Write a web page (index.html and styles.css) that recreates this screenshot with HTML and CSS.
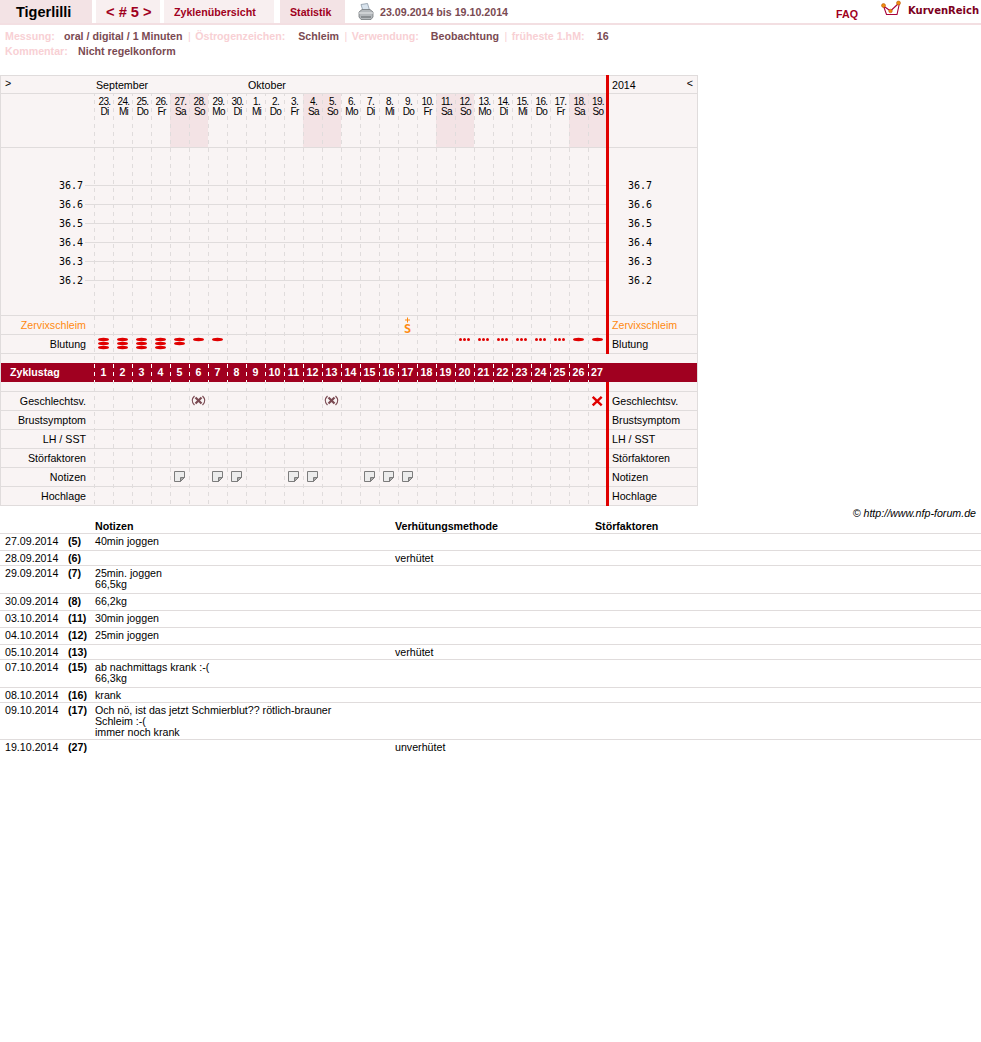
FILE: index.html
```html
<!DOCTYPE html>
<html lang="de">
<head>
<meta charset="utf-8">
<title>Tigerlilli</title>
<link rel="stylesheet" href="styles.css">
</head>
<body>
<svg class="defs" width="0" height="0">
  <defs>
    <ellipse id="bar1" cx="9.500" cy="4.500" rx="5.500" ry="1.700"/>
    <ellipse id="bar2" cx="9.500" cy="8.500" rx="5.500" ry="1.700"/>
    <ellipse id="bar3" cx="9.500" cy="12.500" rx="5.500" ry="1.700"/>
    <g id="b1"><use href="#bar1"/></g>
    <g id="b2"><use href="#bar1"/><use href="#bar2"/></g>
    <g id="b3"><use href="#bar1"/><use href="#bar2"/><use href="#bar3"/></g>
    <g id="dots"><circle cx="5.500" cy="4.500" r="1.500"/><circle cx="9.500" cy="4.500" r="1.500"/><circle cx="13.500" cy="4.500" r="1.500"/></g>
    <g id="xp" fill="none" stroke="#7a4a52"><path d="M5.500 4 Q1 8.500 5.500 13M13.500 4 Q18 8.500 13.500 13" stroke-width="1.200"/><path d="M6.500 5.500l6 6M12.500 5.500l-6 6" stroke-width="2.200"/></g>
    <g id="xr"><path d="M4.700 4.800l9 8.600M13.700 4.800l-9 8.600" fill="none" stroke="#e00000" stroke-width="2.400"/></g>
    <g id="note"><path d="M4.500 3.500h10v6l-4 4h-6z" fill="#ececec" stroke="#7c7c7c"/><path d="M14.500 9.500h-4v4z" fill="#a8a8a8" stroke="#7c7c7c"/></g>
  </defs>
</svg>

<header class="topbar">
  <div class="tab t-name">Tigerlilli</div>
  <div class="tab t-cycle">&lt; # 5 &gt;</div>
  <div class="tab t-over">Zyklenübersicht</div>
  <div class="tab t-stat">Statistik</div>
  <svg class="printer" width="16" height="18" viewBox="0 0 16 18">
    <path d="M3 1.500l6.500-1 2 6.500-6.500 1z" fill="#d9e4ee" stroke="#8a98a6" stroke-width=".8"/>
    <path d="M1 9l3-2.500h8l3 2.500v5l-2 2.500H3l-2-2.500z" fill="#b4b8bc" stroke="#74787c" stroke-width=".8"/>
    <path d="M1 10h14" stroke="#e8eaec"/>
    <path d="M3 14h10" stroke="#5e6266"/>
  </svg>
  <div class="range">23.09.2014 bis 19.10.2014</div>
  <div class="faq">FAQ</div>
  <svg class="crown" width="20" height="18" viewBox="0 0 20 18">
    <path d="M2.500 6l3 8.500h10.500l2.500-11.500M2.500 6l7 5 8.500-8" fill="none" stroke="#a8003a" stroke-width="1.100"/>
    <circle cx="2.500" cy="5.500" r="2" fill="#f08c10" stroke="#b05000" stroke-width=".5"/>
    <circle cx="9.500" cy="11" r="1.800" fill="#f08c10" stroke="#b05000" stroke-width=".5"/>
    <circle cx="17.500" cy="3" r="2" fill="#f08c10" stroke="#b05000" stroke-width=".5"/>
  </svg>
  <div class="brand">KurvenReich</div>
</header>

<section class="info">
  <div class="info-line">
    <span class="lbl l-mess">Messung:</span><span class="val">oral / digital / 1 Minuten</span><span class="sep">|</span>
    <span class="lbl l-oest">Östrogenzeichen:</span><span class="val">Schleim</span><span class="sep">|</span>
    <span class="lbl l-verw">Verwendung:</span><span class="val">Beobachtung</span><span class="sep">|</span>
    <span class="lbl l-hm">früheste 1.hM:</span><span class="val">16</span>
  </div>
  <div class="info-line">
    <span class="lbl l-komm">Kommentar:</span><span class="val">Nicht regelkonform</span>
  </div>
</section>

<section class="chart">
  <div class="row r-month">
    <div class="label arrow">&gt;</div>
    <div class="days months"><span class="m-sep">September</span><span class="m-okt">Oktober</span></div>
    <div class="right with-rail"><span>2014</span><span class="arrow-r">&lt;</span></div>
  </div>
  <div class="row r-date">
    <div class="label"></div>
    <div class="days">
      <div class="d">23.<br>Di</div><div class="d">24.<br>Mi</div><div class="d">25.<br>Do</div><div class="d">26.<br>Fr</div><div class="d we">27.<br>Sa</div><div class="d we">28.<br>So</div><div class="d">29.<br>Mo</div><div class="d">30.<br>Di</div><div class="d">1.<br>Mi</div><div class="d">2.<br>Do</div><div class="d">3.<br>Fr</div><div class="d we">4.<br>Sa</div><div class="d we">5.<br>So</div><div class="d">6.<br>Mo</div><div class="d">7.<br>Di</div><div class="d">8.<br>Mi</div><div class="d">9.<br>Do</div><div class="d">10.<br>Fr</div><div class="d we">11.<br>Sa</div><div class="d we">12.<br>So</div><div class="d">13.<br>Mo</div><div class="d">14.<br>Di</div><div class="d">15.<br>Mi</div><div class="d">16.<br>Do</div><div class="d">17.<br>Fr</div><div class="d we">18.<br>Sa</div><div class="d we">19.<br>So</div>
    </div>
    <div class="right with-rail"></div>
  </div>
  <div class="row r-temp">
    <div class="t-left"><div class="tv">36.7</div><div class="tv">36.6</div><div class="tv">36.5</div><div class="tv">36.4</div><div class="tv">36.3</div><div class="tv">36.2</div></div>
    <div class="t-plot"><div></div><div></div><div></div><div></div><div></div><div></div></div>
    <div class="right with-rail t-right"><div>36.7</div><div>36.6</div><div>36.5</div><div>36.4</div><div>36.3</div><div>36.2</div></div>
  </div>
  <div class="row">
    <div class="label orange">Zervixschleim</div>
    <div class="days"><div class="zs" style="grid-column:17"><svg class="zs-plus" width="7" height="6" viewBox="0 0 7 6"><path d="M3.500 0.500v5M1 3h5" stroke="#ff8a10" fill="none"/></svg><span class="zs-s">S</span></div></div>
    <div class="right with-rail orange">Zervixschleim</div>
  </div>
  <div class="row">
    <div class="label">Blutung</div>
    <div class="days marks">
      <svg class="ic"><use href="#b3"/></svg><svg class="ic"><use href="#b3"/></svg><svg class="ic"><use href="#b3"/></svg><svg class="ic"><use href="#b3"/></svg><svg class="ic"><use href="#b2"/></svg><svg class="ic"><use href="#b1"/></svg><svg class="ic"><use href="#b1"/></svg>
      <svg class="ic" style="grid-column:20"><use href="#dots"/></svg><svg class="ic"><use href="#dots"/></svg><svg class="ic"><use href="#dots"/></svg><svg class="ic"><use href="#dots"/></svg><svg class="ic"><use href="#dots"/></svg><svg class="ic"><use href="#dots"/></svg><svg class="ic"><use href="#b1"/></svg><svg class="ic"><use href="#b1"/></svg>
    </div>
    <div class="right with-rail">Blutung</div>
  </div>
  <div class="gap-top"></div>
  <div class="band">
    <div class="b-label">Zyklustag</div>
    <div class="days b-days"><div>1</div><div>2</div><div>3</div><div>4</div><div>5</div><div>6</div><div>7</div><div>8</div><div>9</div><div>10</div><div>11</div><div>12</div><div>13</div><div>14</div><div>15</div><div>16</div><div>17</div><div>18</div><div>19</div><div>20</div><div>21</div><div>22</div><div>23</div><div>24</div><div>25</div><div>26</div><div>27</div></div>
    <div></div>
  </div>
  <div class="row r-gap">
    <div></div><div></div><div class="right with-rail"></div>
  </div>
  <div class="row">
    <div class="label">Geschlechtsv.</div>
    <div class="days marks"><svg class="ic" style="grid-column:6"><use href="#xp"/></svg><svg class="ic" style="grid-column:13"><use href="#xp"/></svg><svg class="ic" style="grid-column:27"><use href="#xr"/></svg></div>
    <div class="right with-rail">Geschlechtsv.</div>
  </div>
  <div class="row">
    <div class="label">Brustsymptom</div><div class="days"></div><div class="right with-rail">Brustsymptom</div>
  </div>
  <div class="row">
    <div class="label">LH / SST</div><div class="days"></div><div class="right with-rail">LH / SST</div>
  </div>
  <div class="row">
    <div class="label">Störfaktoren</div><div class="days"></div><div class="right with-rail">Störfaktoren</div>
  </div>
  <div class="row">
    <div class="label">Notizen</div>
    <div class="days marks">
      <svg class="ic" style="grid-column:5"><use href="#note"/></svg><svg class="ic" style="grid-column:7"><use href="#note"/></svg><svg class="ic"><use href="#note"/></svg><svg class="ic" style="grid-column:11"><use href="#note"/></svg><svg class="ic"><use href="#note"/></svg><svg class="ic" style="grid-column:15"><use href="#note"/></svg><svg class="ic"><use href="#note"/></svg><svg class="ic"><use href="#note"/></svg>
    </div>
    <div class="right with-rail">Notizen</div>
  </div>
  <div class="row">
    <div class="label">Hochlage</div><div class="days"></div><div class="right with-rail">Hochlage</div>
  </div>
</section>

<div class="copy">© http://www.nfp-forum.de</div>

<table class="notes">
  <thead>
    <tr><th class="c-date"></th><th class="c-day"></th><th class="c-note">Notizen</th><th class="c-meth">Verhütungsmethode</th><th>Störfaktoren</th></tr>
  </thead>
  <tbody>
    <tr><td>27.09.2014</td><td class="day">(5)</td><td>40min joggen</td><td></td><td></td></tr>
    <tr class="tight"><td>28.09.2014</td><td class="day">(6)</td><td></td><td>verhütet</td><td></td></tr>
    <tr><td>29.09.2014</td><td class="day">(7)</td><td>25min. joggen<br>66,5kg</td><td></td><td></td></tr>
    <tr><td>30.09.2014</td><td class="day">(8)</td><td>66,2kg</td><td></td><td></td></tr>
    <tr><td>03.10.2014</td><td class="day">(11)</td><td>30min joggen</td><td></td><td></td></tr>
    <tr><td>04.10.2014</td><td class="day">(12)</td><td>25min joggen</td><td></td><td></td></tr>
    <tr class="tight"><td>05.10.2014</td><td class="day">(13)</td><td></td><td>verhütet</td><td></td></tr>
    <tr><td>07.10.2014</td><td class="day">(15)</td><td>ab nachmittags krank :-(<br>66,3kg</td><td></td><td></td></tr>
    <tr class="tight"><td>08.10.2014</td><td class="day">(16)</td><td>krank</td><td></td><td></td></tr>
    <tr class="tight"><td>09.10.2014</td><td class="day">(17)</td><td>Och nö, ist das jetzt Schmierblut?? rötlich-brauner<br>Schleim :-(<br>immer noch krank</td><td></td><td></td></tr>
    <tr class="last"><td>19.10.2014</td><td class="day">(27)</td><td></td><td>unverhütet</td><td></td></tr>
  </tbody>
</table>
</body>
</html>
```
FILE: styles.css
```css
* { box-sizing: border-box; }
html, body { margin: 0; padding: 0; background: #fff; }
body { font: 8pt/13px "Liberation Sans", Arial, sans-serif; color: #000; }
.defs { position: absolute; }

/* top bar */
.topbar { display: flex; align-items: flex-start; height: 25px; border-bottom: 2px solid #f3dfe2; }
.tab { height: 23px; line-height: 24px; font-weight: bold; color: #a00020; background: #f3e3e5; }
.t-name { width: 92px; padding-left: 16px; font-size: 14.5px; color: #000; }
.t-cycle { width: 64px; margin-left: 4px; padding-left: 10px; font-size: 14.67px; background: #f8eff0; }
.t-over { width: 110px; margin-left: 4px; padding-left: 10px; background: #f8eff0; }
.t-stat { width: 65px; margin-left: 6px; padding-left: 10px; }
.printer { margin: 3px 0 0 13px; flex: none; }
.range { margin-left: 6px; line-height: 24px; font-weight: bold; color: #7a4a52; }
.faq { margin-left: auto; margin-top: 8px; font-weight: bold; color: #a00020; }
.crown { margin: 0 0 0 23px; flex: none; }
.brand { width: 73px; margin-left: 7px; margin-top: 4px; font: bold 10px/13px "DejaVu Sans", sans-serif; color: #7c0020; white-space: nowrap; }

/* info */
.info { height: 50px; padding: 4px 0 0 5px; font-weight: bold; }
.info-line { display: flex; height: 15px; line-height: 15px; white-space: pre; }
.lbl { color: #f8d0d4; }
.val { color: #7a4a52; }
.sep { color: #f8d0d4; margin: 0 4.5px 0 5.5px; font-weight: normal; }
.l-mess { width: 59px; }
.l-oest { width: 103px; }
.l-verw { width: 79px; }
.l-hm { width: 85px; }
.l-komm { width: 73px; }

/* chart */
.chart {
  position: relative;
  width: 698px;
  background: #f9f4f4;
  border-left: 1px solid #e0dcdc;
  border-right: 1px solid #e0dcdc;
}
.chart::after {
  content: "";
  position: absolute;
  left: 93px;
  top: 19px;
  bottom: 0;
  width: 512px;
  pointer-events: none;
  background: conic-gradient(from 270deg at 1px 4px, #e0dcdc 25%, transparent 0) 0 6px / 19px 8px;
}
.row {
  display: grid;
  grid-template-columns: 93px 512px 91px;
  height: 19px;
  line-height: 18px;
  background: linear-gradient(#e0dcdc, #e0dcdc) bottom / 100% 1px no-repeat;
}
.label { padding-right: 8px; text-align: right; }
.orange { color: #ff8a10; }
.days { display: grid; grid-template-columns: repeat(26, 19px) 18px; grid-template-rows: 18px; }
.right { padding-left: 3px; }
.with-rail { border-left: 3px solid #e00000; }

.r-month { background: linear-gradient(#e0dcdc, #e0dcdc) top / 100% 1px no-repeat, linear-gradient(#e0dcdc, #e0dcdc) bottom / 100% 1px no-repeat; line-height: 20px; }
.arrow { padding: 0 0 0 4px; text-align: left; line-height: 17px; }
.months .m-sep { grid-column: 1 / span 8; padding-left: 2px; }
.months .m-okt { grid-column: 9 / span 8; padding-left: 2px; }
.r-month .right { display: flex; justify-content: space-between; padding-right: 4px; }
.arrow-r { line-height: 17px; }

.r-date { height: 54px; }
.r-date .days { grid-template-rows: 53px; }
.d { padding: 3px 0 0 2px; font-size: 10px; line-height: 10px; letter-spacing: -0.7px; text-align: center; }
.we { background: #f3e3e5; }

.r-temp { height: 168px; }
.t-left, .t-plot, .t-right { padding-top: 28px; }
.tv {
  height: 19px;
  padding-right: 11px;
  text-align: right;
  font: 10px/19px "DejaVu Sans Mono", monospace;
  background: linear-gradient(#e0dcdc, #e0dcdc) right 9px / 9px 1px no-repeat;
}
.t-plot div { height: 19px; background: linear-gradient(#e0dcdc, #e0dcdc) 0 9px / 100% 1px no-repeat; }
.t-right { padding-left: 19px; font: 10px/19px "DejaVu Sans Mono", monospace; }

.ic { display: block; width: 19px; height: 18px; overflow: visible; fill: #e00000; }
.zs { display: flex; flex-direction: column; align-items: center; padding-top: 1px; font-family: "DejaVu Sans Mono", monospace; font-weight: bold; color: #ff8a10; }
.zs-plus { flex: none; }
.zs-s { margin-top: 1px; font-size: 12px; line-height: 10px; }

.gap-top { height: 9px; }
.band {
  position: relative;
  z-index: 1;
  display: grid;
  grid-template-columns: 93px 512px 91px;
  height: 19px;
  line-height: 19px;
  font-weight: bold;
  color: #fff;
  background: #a00020;
}
.b-label { padding-left: 9px; }
.b-days {
  text-align: center;
  grid-template-rows: 19px;
  background: conic-gradient(from 270deg at 1px 4px, #fff 25%, transparent 0) 0 1px / 19px 8px;
}
.r-gap { height: 10px; }

/* footer table */
.copy { height: 13px; margin-top: 1px; padding-right: 5px; text-align: right; font-style: italic; line-height: 13px; }
.notes { width: 981px; border-collapse: collapse; table-layout: fixed; }
.notes th { padding: 0; height: 13px; text-align: left; vertical-align: top; line-height: 13px; border-bottom: 1px solid #e0dcdc; }
.c-date { width: 68px; }
.c-day { width: 27px; }
.c-note { width: 300px; }
.c-meth { width: 200px; }
.notes td { padding: 2px 0 3px; line-height: 11px; vertical-align: top; border-bottom: 1px solid #e0dcdc; }
.notes td:first-child { padding-left: 5px; }
.notes .tight td { padding-bottom: 1px; }
.notes .last td { border-bottom: 0; }
.day { font-weight: bold; }
```
